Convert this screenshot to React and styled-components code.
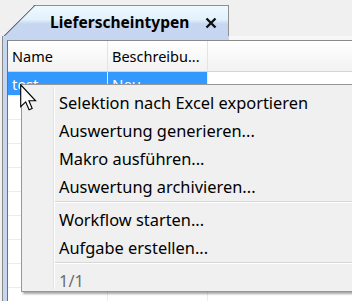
import React from 'react';
import styled, { createGlobalStyle } from 'styled-components';

const GlobalStyle = createGlobalStyle`
  html, body {
    margin: 0;
    padding: 0;
    background: #f0f0f0;
    font-family: "Noto Sans", "Open Sans", sans-serif;
    overflow: hidden;
  }
`;

const menuItems = [
  ['Selektion nach Excel exportieren', 'Auswertung generieren...', 'Makro ausführen...', 'Auswertung archivieren...'],
  ['Workflow starten...', 'Aufgabe erstellen...'],
];

const rows = Array.from({ length: 10 });

export default function App() {
  return (
    <>
      <GlobalStyle />
      <Screen>
        <TabStrip>
          <Tab>
            <TabCorner />
            <TabTitle>Lieferscheintypen</TabTitle>
            <CloseIcon viewBox="0 0 12 12">
              <path d="M1.5 1.5 L10.5 10.5 M10.5 1.5 L1.5 10.5" stroke="#111" strokeWidth="2.4" />
            </CloseIcon>
          </Tab>
          <TabFill />
        </TabStrip>
        <Panel>
          <Grid>
            <HeaderRow>
              <HeaderCell $w={100}>Name</HeaderCell>
              <HeaderCell $w={100}>Beschreibu...</HeaderCell>
              <HeaderCell $last />
            </HeaderRow>
            <Row>
              <Cell $w={100} $selected>test</Cell>
              <Cell $w={100} $selected>Neu</Cell>
              <Cell $last />
            </Row>
            {rows.map((_, i) => (
              <Row key={i}>
                <Cell $w={100} />
                <Cell $w={100} />
                <Cell $last />
              </Row>
            ))}
          </Grid>
        </Panel>

        <Menu>
          {menuItems.map((group, gi) => (
            <React.Fragment key={gi}>
              {group.map((label) => (
                <MenuItem key={label}>{label}</MenuItem>
              ))}
              <Separator />
            </React.Fragment>
          ))}
          <MenuItem $disabled>1/1</MenuItem>
        </Menu>

        <Cursor viewBox="0 0 12 19" width="17" height="27">
          <path
            d="M0.5 0.5 L0.5 16 L4 12.6 L6.4 18.2 L8.6 17.2 L6.3 11.8 L11 11.8 Z"
            fill="#fff"
            stroke="#000"
            strokeWidth="0.8"
            strokeLinejoin="miter"
          />
        </Cursor>
      </Screen>
    </>
  );
}

const Screen = styled.div`
  position: relative;
  width: 352px;
  height: 301px;
  padding-top: 5px;
  box-sizing: border-box;
  overflow: hidden;
`;

const TabStrip = styled.div`
  display: flex;
  height: 31px;
  padding-left: 3px;
`;

const Tab = styled.div`
  position: relative;
  width: 226px;
  display: flex;
  align-items: center;
  gap: 16px;
  padding-left: 47px;
  box-sizing: border-box;
  background: linear-gradient(#ecfaff 0%, #e2f1fb 45%, #c7d6f1 60%, #c6d5f0 100%);
  border-top: 1px solid #8f8f8f;
  border-right: 1px solid #8f8f8f;
  clip-path: polygon(31px 0, 100% 0, 100% 100%, 0 100%, 0 31px);
`;

const TabCorner = styled.div`
  position: absolute;
  left: 0;
  top: -1px;
  width: 32px;
  height: 32px;
  background: linear-gradient(to bottom right, transparent 48.5%, #6d6d6d 49.5%, #6d6d6d 51%, transparent 52%);
`;

const TabTitle = styled.span`
  font-size: 15.5px;
  font-weight: 700;
  color: #000;
  margin-top: 2px;
`;

const CloseIcon = styled.svg`
  width: 12px;
  height: 12px;
  margin-top: 4px;
`;

const TabFill = styled.div`
  flex: 1;
`;

const Panel = styled.div`
  margin-left: 2px;
  height: 270px;
  padding: 4px 0 0 4px;
  border-left: 1px solid #8a8a8a;
  background: linear-gradient(to right, #c6d5f0 0, #c6d5f0 226px, #f7f7f7 226px);
  box-sizing: border-box;
`;

const Grid = styled.div`
  height: 100%;
  background: #fff;
  border-top: 1px solid #8a8a8a;
  border-left: 1px solid #6f6f6f;
`;

const HeaderRow = styled.div`
  display: flex;
  height: 30px;
  background: linear-gradient(#ffffff, #f2f2f2);
  border-bottom: 1px solid #d5d5d5;
`;

const HeaderCell = styled.div`
  width: ${(p) => (p.$last ? 'auto' : `${p.$w}px`)};
  flex: ${(p) => (p.$last ? 1 : 'none')};
  display: flex;
  align-items: center;
  padding-left: 4px;
  font-size: 14.5px;
  color: #000;
  border-right: ${(p) => (p.$last ? 'none' : '1px solid #e4e4e4')};
  box-sizing: border-box;
  white-space: nowrap;
  overflow: hidden;
`;

const Row = styled.div`
  display: flex;
  height: 23px;
  border-bottom: 1px solid #ececec;
`;

const Cell = styled.div`
  width: ${(p) => (p.$last ? 'auto' : `${p.$w}px`)};
  flex: ${(p) => (p.$last ? 1 : 'none')};
  display: flex;
  align-items: center;
  padding-left: 4px;
  font-size: 15px;
  color: ${(p) => (p.$selected ? '#fff' : '#000')};
  background: ${(p) => (p.$selected ? '#3399ff' : 'transparent')};
  border-right: ${(p) => (p.$last ? 'none' : '1px solid #ececec')};
  box-sizing: border-box;
`;

const Menu = styled.div`
  position: absolute;
  left: 21px;
  top: 84px;
  width: 345px;
  height: 208px;
  box-sizing: border-box;
  padding: 3px 0 0 0;
  background: #f0f0f0;
  border: 1px solid #979797;
  box-shadow: 2px 2px 2px rgba(0, 0, 0, 0.35);

  &::before {
    content: '';
    position: absolute;
    left: 31px;
    top: 2px;
    bottom: 2px;
    width: 1px;
    background: #e2e2e2;
    border-right: 1px solid #ffffff;
  }
`;

const MenuItem = styled.div`
  height: 28px;
  display: flex;
  align-items: center;
  padding-left: 37px;
  font-size: 16.4px;
  color: ${(p) => (p.$disabled ? '#6d6d6d' : '#000')};
  white-space: nowrap;
`;

const Separator = styled.div`
  margin: 1px 2px 2px 33px;
  height: 1px;
  background: #d7d7d7;
  border-bottom: 1px solid #fff;
`;

const Cursor = styled.svg`
  position: absolute;
  left: 20px;
  top: 84px;
`;
